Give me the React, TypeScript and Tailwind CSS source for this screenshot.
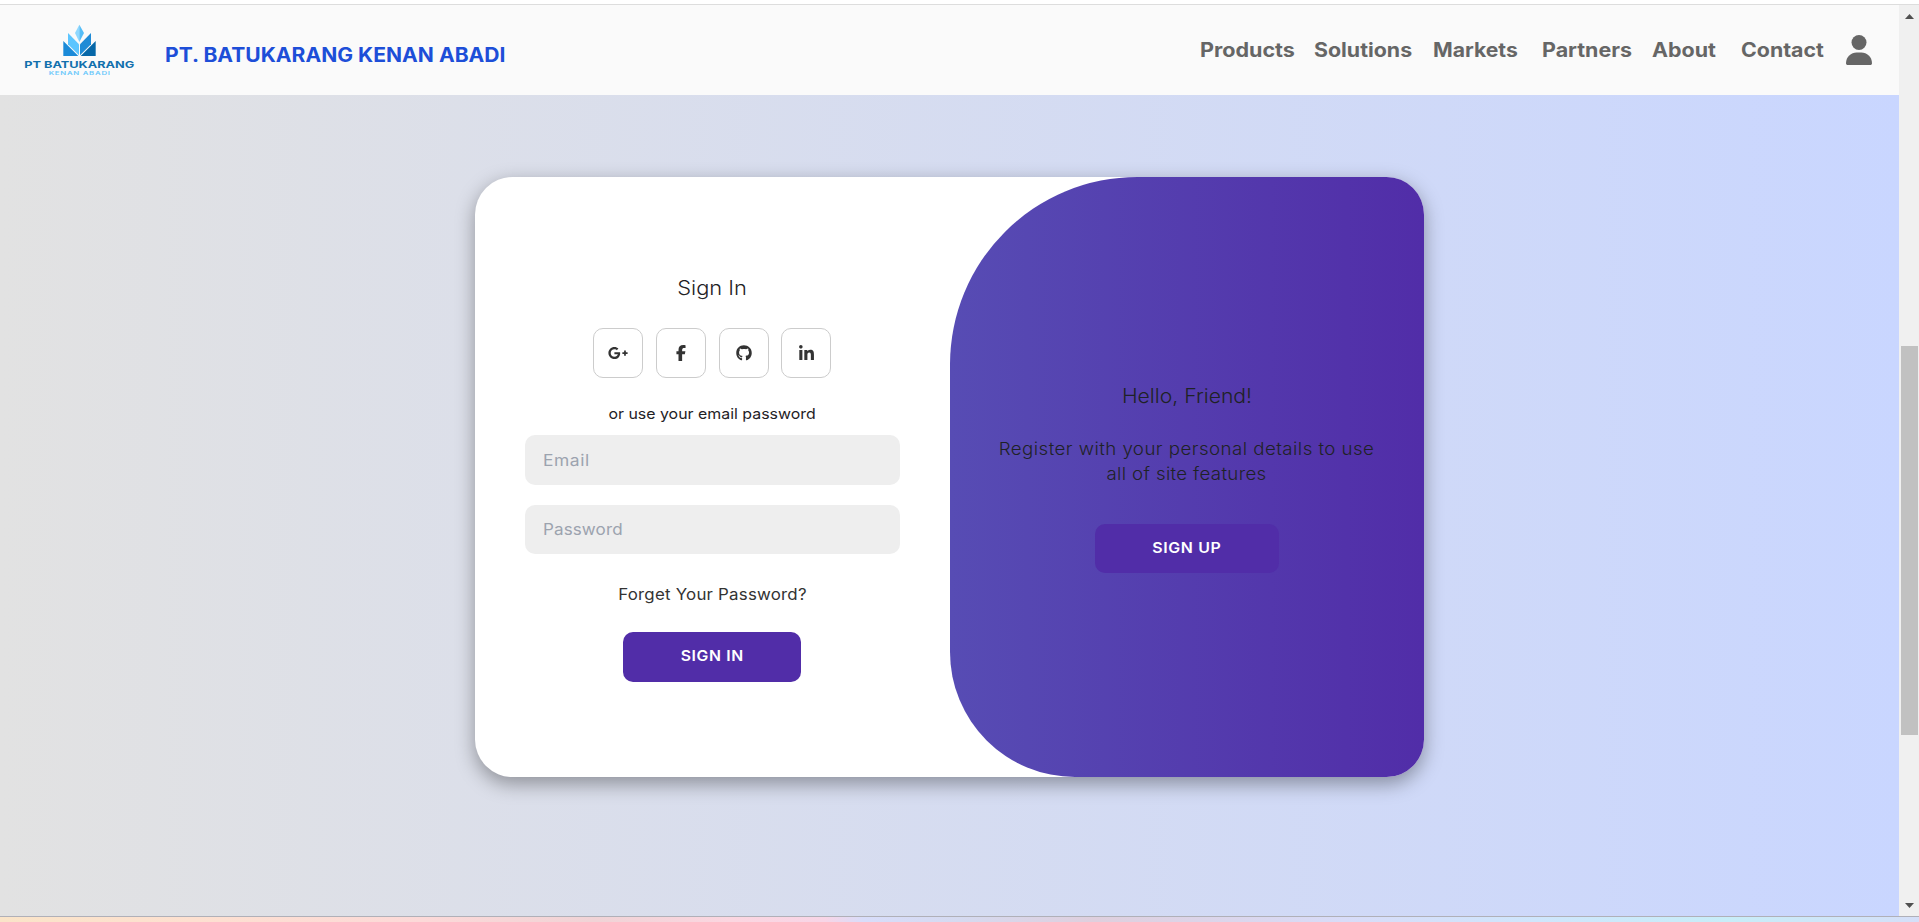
import type { ReactNode } from "react";
import { FaFacebookF, FaGithub, FaGooglePlusG, FaLinkedinIn } from "react-icons/fa6";

const navItems = [
  { label: "Products", width: "w-[114px]", stretch: "scale-x-[1.105]" },
  { label: "Solutions", width: "w-[119px]", stretch: "scale-x-[1.095]" },
  { label: "Markets", width: "w-[109px]", stretch: "scale-x-[1.085]" },
  { label: "Partners", width: "w-[110px]", stretch: "scale-x-[1.1]" },
  { label: "About", width: "w-[89px]", stretch: "scale-x-[1.1]" },
  { label: "Contact", width: "w-[105px]", stretch: "scale-x-[1.095]" },
];

function Logo() {
  return (
    <svg viewBox="0 0 420 210" className="h-[70px] w-[140px] shrink-0" aria-label="PT Batukarang Kenan Abadi">
      <path d="M208 29 L195 54 L208 81 Z" fill="#8fd8ff" />
      <path d="M208 29 L222 54 L208 81 Z" fill="#55bdf7" />
      <path d="M174 54 L207 88 V121 L174 88 Z" fill="#5cc5ff" />
      <path d="M243 54 L210 88 V121 L243 88 Z" fill="#1f8bd6" />
      <path d="M160 78 L205 123 H160 Z" fill="#1a8ad8" />
      <path d="M257 78 L212 123 H257 Z" fill="#0667a8" />
      <text x="43" y="160" fontSize="28" fontWeight="700" fill="#1170ad" textLength="330" lengthAdjust="spacingAndGlyphs">
        PT BATUKARANG
      </text>
      <text x="116" y="180" fontSize="16" fontWeight="600" fill="#6cc8fa" letterSpacing="1.5" textLength="186" lengthAdjust="spacingAndGlyphs">
        KENAN ABADI
      </text>
    </svg>
  );
}

function UserIcon() {
  return (
    <svg viewBox="0 0 26 30" className="h-[30px] w-[26px]" fill="#666666" aria-label="Account">
      <circle cx="13" cy="7.5" r="7.5" />
      <path d="M0 28.2 C0 21.6 5.2 17.4 10.6 17.4 H15.4 C20.8 17.4 26 21.6 26 28.2 C26 29.3 25.3 30 24.2 30 H1.8 C0.7 30 0 29.3 0 28.2 Z" />
    </svg>
  );
}

function Header() {
  return (
    <header className="flex h-[90px] shrink-0 items-start bg-[#fafafa] pt-[10px] pl-[10px]">
      <Logo />
      <h1 className="mt-[25px] ml-[14.5px] origin-left scale-x-[1.081] text-[19.5px] leading-[30px] font-bold whitespace-nowrap text-[#1d4ed8]">
        PT. BATUKARANG KENAN ABADI
      </h1>
      <nav className="mt-5 mr-[27px] ml-auto flex items-start">
        {navItems.map((item) => (
          <a key={item.label} href="#" className={`${item.width} text-[19.5px] leading-[30px] font-bold text-[#666666]`}>
            <span className={`inline-block origin-left ${item.stretch}`}>{item.label}</span>
          </a>
        ))}
        <UserIcon />
      </nav>
    </header>
  );
}

function SocialButton({ children }: { children: ReactNode }) {
  return (
    <a href="#" className="flex size-[50px] items-center justify-center rounded-[10px] border border-[#cccccc] text-[#333333]">
      {children}
    </a>
  );
}

function SignInForm() {
  return (
    <form className="flex w-[475px] flex-col items-center px-[50px] pt-24">
      <h2 className="scale-x-[1.12] text-[19.5px] leading-[30px] font-[350]">Sign In</h2>
      <div className="mt-[25px] mr-[0.4px] flex gap-[12.67px]">
        <SocialButton><FaGooglePlusG className="h-4 w-5" /></SocialButton>
        <SocialButton><FaFacebookF className="h-4 w-[10px]" /></SocialButton>
        <SocialButton><FaGithub className="size-4" /></SocialButton>
        <SocialButton><FaLinkedinIn className="h-[17px] w-[15px]" /></SocialButton>
      </div>
      <span className="mt-[26px] scale-x-[1.09] text-[14.6px] leading-5">or use your email password</span>
      <div className="mt-[11px] flex h-[50px] w-full rounded-[10px] bg-[#eeeeee] px-[18px]">
        <input
          type="email"
          placeholder="Email"
          className="w-[300px] origin-left scale-x-[1.1] pt-px text-[15.85px] tracking-[0.5px] outline-none placeholder:text-[#9ca3af]"
        />
      </div>
      <div className="mt-5 flex h-[49px] w-full rounded-[10px] bg-[#eeeeee] px-[18px]">
        <input
          type="password"
          placeholder="Password"
          className="w-[300px] origin-left scale-x-[1.075] text-[15.85px] tracking-[0.1px] outline-none placeholder:text-[#9ca3af]"
        />
      </div>
      <a href="#" className="mt-[29px] scale-x-[1.065] text-[15.85px] leading-6 tracking-[0.2px] text-[#333333]">
        Forget Your Password?
      </a>
      <button type="button" className="mt-[25px] mr-px h-[50px] w-[178px] rounded-[10px] bg-[#512da8] text-[14.6px] font-semibold tracking-[0.6px] text-white">
        <span className="inline-block scale-x-[1.08]">SIGN IN</span>
      </button>
    </form>
  );
}

function WelcomePanel() {
  return (
    <section className="flex flex-1 flex-col items-center rounded-tl-[187.5px] rounded-bl-[125px] bg-linear-to-r/srgb from-[#574cb4] to-[#512da8] pt-[204px]">
      <h2 className="scale-x-[1.085] text-[19.5px] leading-[30px] font-[350]">Hello, Friend!</h2>
      <p className="mt-[25px] scale-x-[1.095] text-center text-[17.1px] leading-[25px] font-[350] tracking-[0.4px] whitespace-nowrap">
        Register with your personal details to use
        <br />
        <span className="tracking-[0.3px]">all of site features</span>
      </p>
      <button type="button" className="mt-[38px] h-[49px] w-[184px] rounded-[10px] bg-[#512da8] text-[14.6px] font-semibold tracking-[0.6px] text-white">
        <span className="inline-block scale-x-[1.09]">SIGN UP</span>
      </button>
    </section>
  );
}

function Scrollbar() {
  return (
    <aside className="flex w-5 shrink-0 flex-col items-center bg-[#f0f0f0] pt-[9px] pb-2">
      <svg viewBox="0 0 9 5" className="h-[5px] w-[9px]" fill="#505050"><path d="M4.5 0 L9 5 H0 Z" /></svg>
      <div className="mt-[327px] h-[389px] w-[17px] bg-[#c1c1c1]" />
      <svg viewBox="0 0 9 5" className="mt-auto h-[5px] w-[9px]" fill="#505050"><path d="M0 0 H9 L4.5 5 Z" /></svg>
    </aside>
  );
}

export default function App() {
  return (
    <div className="flex h-[922px] w-[1919px] flex-col overflow-hidden bg-white font-[Inter,sans-serif] text-[#1f2226]">
      <div className="mt-1 h-px shrink-0 bg-[#dddddd]" />
      <div className="flex h-[911px] shrink-0">
        <div className="flex w-[1899px] flex-col">
          <Header />
          <main className="flex flex-1 justify-center bg-linear-to-r/srgb from-[#e2e2e2] to-[#c9d6ff] pt-[82px]">
            <div className="flex h-[600px] w-[949px] overflow-hidden rounded-[37.5px] bg-white shadow-[0_6.25px_18.75px_rgba(0,0,0,0.35)]">
              <SignInForm />
              <WelcomePanel />
            </div>
          </main>
        </div>
        <Scrollbar />
      </div>
      <div className="h-px shrink-0 bg-[#b0b0b8]" />
      <div className="flex-1 bg-[linear-gradient(to_right,#fae4c8_0%,#fde0d0_10%,#fcd9d8_22%,#f0d3d6_31%,#fbd6e0_38%,#f8d5e6_43%,#d8ddfa_45%,#d5daf0_50%,#dfcfdd_57%,#d8dcf8_70%,#cfe6fc_80%,#c8edf8_90%,#d5dff8_100%)]" />
    </div>
  );
}
